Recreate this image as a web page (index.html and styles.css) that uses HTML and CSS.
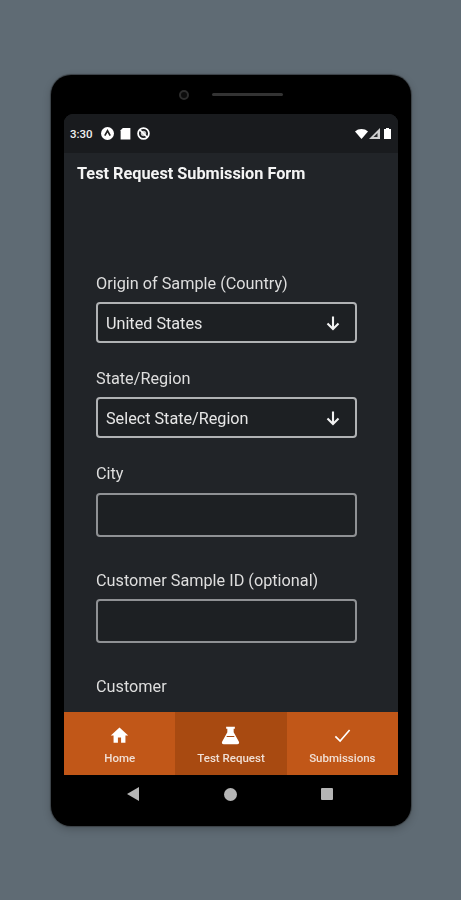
FILE: index.html
```html
<!DOCTYPE html>
<html lang="en">
<head>
<meta charset="utf-8">
<title>Test Request Submission Form</title>
<link rel="stylesheet" href="styles.css">
</head>
<body>
<div class="phone">
  <div class="bezel-top">
    <span class="camera"></span>
    <span class="speaker"></span>
  </div>
  <div class="screen">
    <div class="status">
      <span class="time">3:30</span>
      <svg class="st-icon" viewBox="0 0 12 12"><circle cx="6" cy="6" r="6" fill="#fff"/><path d="M3.500 8 6 3.500 8.500 8" fill="none" stroke="#222" stroke-width="1.500"/></svg>
      <svg class="st-icon st-card" viewBox="0 0 10 12"><path d="M2.500 1H9.500V11.500H.5V3Z" fill="#fff"/></svg>
      <svg class="st-icon" viewBox="0 0 12 12"><circle cx="6" cy="6" r="5" fill="none" stroke="#fff" stroke-width="1.600"/><path d="M2.500 2.500 9.500 9.500" stroke="#fff" stroke-width="1.500"/><circle cx="6" cy="6" r="2.500" fill="#fff" fill-opacity=".75"/></svg>
      <span class="status-gap"></span>
      <svg class="st-wifi" viewBox="0 0 13 10"><path d="M0 2.500C3.500-.8 9.500-.8 13 2.500L6.500 10Z" fill="#fff"/></svg>
      <svg class="st-signal" viewBox="0 0 11 11"><path d="M11 0V11H0Z" fill="#cfcfcf"/><path d="M8.500 5V9H4.500Z" fill="#26282b"/></svg>
      <svg class="st-batt" viewBox="0 0 7 11"><path d="M2 0H5V1H7V11H0V1H2Z" fill="#fff"/></svg>
    </div>
    <header class="appbar">Test Request Submission Form</header>
    <main class="form">
      <div class="field">
        <label class="label">Origin of Sample (Country)</label>
        <div class="select"><span>United States</span>
          <svg class="arrow" viewBox="0 0 16 16"><path d="M8 1.500V14M2.500 8.500 8 14 13.500 8.500" fill="none" stroke="#f2f2f2" stroke-width="2.100"/></svg>
        </div>
      </div>
      <div class="field">
        <label class="label">State/Region</label>
        <div class="select"><span>Select State/Region</span>
          <svg class="arrow" viewBox="0 0 16 16"><path d="M8 1.500V14M2.500 8.500 8 14 13.500 8.500" fill="none" stroke="#f2f2f2" stroke-width="2.100"/></svg>
        </div>
      </div>
      <div class="field field-input field-city">
        <label class="label">City</label>
        <div class="input"></div>
      </div>
      <div class="field field-input">
        <label class="label">Customer Sample ID (optional)</label>
        <div class="input"></div>
      </div>
      <div class="field">
        <label class="label">Customer</label>
      </div>
    </main>
    <nav class="tabs">
      <div class="tab">
        <svg class="tab-icon" viewBox="0 0 24 24"><path d="M10 21V14.500H14V21H19.500V12H23L12 2 1 12H4.500V21Z" fill="#fff"/></svg>
        <span>Home</span>
      </div>
      <div class="tab tab-active">
        <svg class="tab-icon" viewBox="0 0 24 24"><path d="M6.500 1H17.500V3.500H16V8L22.500 19.500C23.500 21.500 22.500 23 20.500 23H3.500C1.500 23 .5 21.500 1.500 19.500L8 8V3.500H6.500ZM7.500 12.500 6.800 14H17.200L16.500 12.500Z" fill="#fff" fill-rule="evenodd"/></svg>
        <span>Test Request</span>
      </div>
      <div class="tab">
        <svg class="tab-icon" viewBox="0 0 24 24"><path d="M3 13 9 19 21 5" fill="none" stroke="#fff" stroke-width="2.100"/></svg>
        <span>Submissions</span>
      </div>
    </nav>
  </div>
  <div class="sysnav">
    <svg class="sys-back" viewBox="0 0 12 14"><path d="M12 0V14L0 7Z" fill="#b5b5b5"/></svg>
    <span class="sys-home"></span>
    <span class="sys-recent"></span>
  </div>
</div>
</body>
</html>
```
FILE: styles.css
```css
* { box-sizing: border-box; }
html, body { margin: 0; height: 100%; }
body {
  width: 461px;
  height: 900px;
  overflow: hidden;
  background: #5f6b74;
  font-family: Roboto, "Liberation Sans", sans-serif;
  padding: 75px 51px 0;
}
.phone {
  width: 360px;
  height: 751px;
  background: #000;
  border-radius: 20px;
  padding: 0 13px;
  display: flex;
  flex-direction: column;
  box-shadow: 0 0 1px 1px #3a4045, 0 3px 8px rgba(0,0,0,.22);
  filter: blur(.55px);
}
.bezel-top {
  height: 39px;
  flex: none;
  display: flex;
  align-items: center;
  justify-content: center;
  gap: 23px;
}
.camera {
  width: 10px;
  height: 10px;
  border-radius: 50%;
  background: #0c0c0c;
  border: 2.500px solid #2d2d2d;
}
.speaker {
  width: 71px;
  height: 3px;
  border-radius: 2px;
  background: #333;
}
.screen {
  flex: 1;
  min-height: 0;
  background: #212428;
  border-radius: 9px 9px 0 0;
  display: flex;
  flex-direction: column;
}
.status {
  height: 39px;
  flex: none;
  background: #191b1e;
  border-radius: 9px 9px 0 0;
  display: flex;
  align-items: center;
  gap: 6px;
  padding: 0 7px 0 6px;
  color: #eee;
}
.time { font-size: 11.500px; font-weight: 500; margin-right: 2px; }
.st-icon { width: 13px; height: 13px; }
.st-card { width: 11px; }
.status-gap { flex: 1; }
.st-wifi { width: 13px; height: 10px; }
.st-signal { width: 11px; height: 11px; margin-left: -5px; }
.st-batt { width: 7px; height: 11px; margin-left: -2px; }
.appbar {
  height: 40px;
  flex: none;
  padding: 11px 0 0 13px;
  font-size: 16.300px;
  line-height: 19px;
  font-weight: 700;
  color: #f4f4f4;
}
.form {
  flex: 1;
  min-height: 0;
  overflow: hidden;
  padding: 80px 41px 0 32px;
  display: flex;
  flex-direction: column;
}
.field { display: flex; flex-direction: column; margin-bottom: 25px; }
.field-input { margin-bottom: 33px; }
.label {
  font-size: 16.250px;
  line-height: 22px;
  color: #dedede;
  margin-bottom: 7px;
}
.field-city .label { margin-bottom: 8px; }
.select, .input {
  width: 261px;
  border: 2px solid #b0b2b4;
  border-radius: 4px;
  background: #1d2023;
}
.select {
  height: 41px;
  display: flex;
  align-items: center;
  justify-content: space-between;
  padding: 2px 14px 0 8px;
  font-size: 16.200px;
  color: #e6e6e6;
}
.input { height: 44px; border-color: #8f9194; }
.arrow { width: 16px; height: 16px; margin-top: -2px; }
.tabs {
  height: 63px;
  flex: none;
  display: grid;
  grid-template-columns: repeat(3, 1fr);
  background: #c15718;
}
.tab {
  display: flex;
  flex-direction: column;
  align-items: center;
  padding-top: 14px;
  color: #f0dfd5;
  font-size: 11.500px;
  font-weight: 500;
  line-height: 14px;
}
.tab-active { background: #a84a11; }
.tab-icon { width: 19px; height: 19px; margin-bottom: 6px; }
.sysnav {
  height: 51px;
  flex: none;
  display: flex;
  align-items: center;
  justify-content: space-between;
  padding: 0 65px 13px 63px;
}
.sys-back { width: 12px; height: 14px; }
.sys-home { width: 13px; height: 13px; border-radius: 50%; background: #b5b5b5; }
.sys-recent { width: 12px; height: 12px; background: #b5b5b5; border-radius: 1px; }
```
